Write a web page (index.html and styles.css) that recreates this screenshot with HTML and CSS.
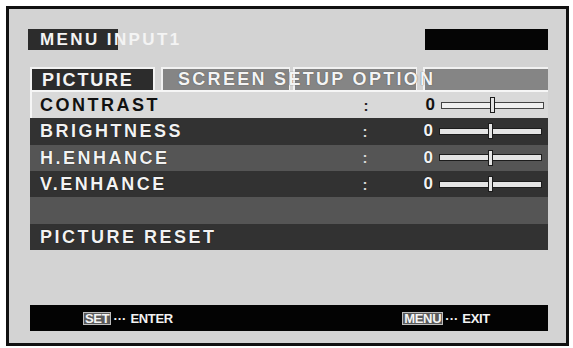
FILE: index.html
```html
<!DOCTYPE html>
<html>
<head>
<meta charset="utf-8">
<link rel="stylesheet" href="styles.css">
</head>
<body>
<div class="screen">
  <div class="header">
    <div class="menu-box">MENU INPUT1</div>
    <div class="black-box"></div>
  </div>
  <div class="tabs">
    <div class="tab-active">PICTURE</div>
    <div class="tab tab-a"><span class="tab-text">SCREEN SETUP OPTION</span></div>
    <div class="tab tab-b"></div>
    <div class="tab tab-c"></div>
  </div>
  <div class="rows">
    <div class="row row-sel">
      <span class="label">CONTRAST</span>
      <span class="colon">:</span>
      <span class="value">0</span>
      <span class="slider"><span class="track"></span><span class="knob"></span></span>
    </div>
    <div class="row row-dark">
      <span class="label">BRIGHTNESS</span>
      <span class="colon">:</span>
      <span class="value">0</span>
      <span class="slider"><span class="track"></span><span class="knob"></span></span>
    </div>
    <div class="row row-mid">
      <span class="label">H.ENHANCE</span>
      <span class="colon">:</span>
      <span class="value">0</span>
      <span class="slider"><span class="track"></span><span class="knob"></span></span>
    </div>
    <div class="row row-dark">
      <span class="label">V.ENHANCE</span>
      <span class="colon">:</span>
      <span class="value">0</span>
      <span class="slider"><span class="track"></span><span class="knob"></span></span>
    </div>
    <div class="row row-mid"></div>
    <div class="row row-dark">
      <span class="label">PICTURE RESET</span>
    </div>
  </div>
  <div class="footer">
    <div class="hint"><span class="key">SET</span><span class="dots">···</span><span class="hint-text">ENTER</span></div>
    <div class="hint"><span class="key">MENU</span><span class="dots">···</span><span class="hint-text">EXIT</span></div>
  </div>
</div>
</body>
</html>
```
FILE: styles.css
```css
html, body {
  margin: 0;
  padding: 0;
  background: #ffffff;
}

body {
  font-family: "Liberation Sans", Arial, sans-serif;
}

.screen {
  margin: 6px 0 0 6px;
  width: 563px;
  height: 340px;
  box-sizing: border-box;
  border: 3px solid #111111;
  background: #d3d3d3;
  padding: 20px 18px 12px 21px;
  display: flex;
  flex-direction: column;
}

.header {
  display: flex;
  justify-content: space-between;
  height: 21px;
}

.menu-box {
  width: 90px;
  margin-left: -2px;
  height: 21px;
  box-sizing: border-box;
  padding-left: 12px;
  background: #2c2c2c;
  color: #f4f4f4;
  font-weight: bold;
  font-size: 17px;
  line-height: 22px;
  letter-spacing: 2.4px;
  white-space: nowrap;
  overflow: visible;
}

.black-box {
  width: 123px;
  height: 21px;
  background: #050505;
}

.tabs {
  display: flex;
  margin-top: 17px;
  height: 23px;
}

.tab-active {
  width: 125px;
  box-sizing: border-box;
  border: 2px solid #f2f2f2;
  border-bottom: none;
  background: #2c2c2c;
  color: #f4f4f4;
  font-weight: bold;
  font-size: 18px;
  line-height: 22px;
  letter-spacing: 1.8px;
  padding-left: 10px;
  white-space: nowrap;
}

.tab {
  box-sizing: border-box;
  background: #858585;
  border-top: 2px solid #f2f2f2;
  border-left: 2px solid #f2f2f2;
  border-right: 1px solid #f2f2f2;
  color: #f4f4f4;
  font-weight: bold;
  font-size: 18px;
  line-height: 21px;
  letter-spacing: 2.3px;
  white-space: nowrap;
}

.tab-a {
  width: 129px;
  margin-left: 6px;
  padding-left: 15px;
  overflow: visible;
  position: relative;
  z-index: 1;
}

.tab-text {
  text-shadow: 0 0 1px #333;
}

.tab-b {
  width: 124px;
  margin-left: 3px;
}

.tab-c {
  width: 125px;
  margin-left: 6px;
  border-right: none;
}

.rows {
  display: flex;
  flex-direction: column;
}

.row {
  height: 26.33px;
  box-sizing: border-box;
  display: grid;
  grid-template-columns: 320px 30px 54px 109px;
  align-items: center;
}

.row-sel {
  background: #d9d9d9;
  border-top: 2px solid #f6f6f6;
  border-left: 2px solid #f6f6f6;
  height: 28.33px;
  color: #111111;
}

.row-dark {
  background: #323232;
  color: #f2f2f2;
}

.row-mid {
  background: #555555;
  color: #f2f2f2;
}

.label {
  padding-left: 10px;
  font-weight: bold;
  font-size: 18px;
  letter-spacing: 2.5px;
  white-space: nowrap;
  line-height: 20px;
}

.row-sel .label {
  padding-left: 8px;
}

.row-dark .label,
.row-mid .label,
.row-dark .value,
.row-mid .value {
  text-shadow: 0 0 1px #000;
}

.colon {
  text-align: center;
  font-weight: bold;
  font-size: 15px;
  color: #d8d8d8;
}

.row-sel .colon {
  color: #222222;
}

.value {
  text-align: right;
  font-weight: bold;
  font-size: 17px;
  padding-right: 1px;
}

.row-sel .colon { margin-left: -2px; }

.slider {
  position: relative;
  margin-left: 5px;
  width: 103px;
  height: 16px;
  display: flex;
  align-items: center;
}

.track {
  width: 103px;
  height: 7px;
  box-sizing: border-box;
  border: 1px solid #1c1c1c;
  background: #e4e4e4;
}

.row-sel .track {
  background: #f0f0f0;
  border-color: #444;
}

.knob {
  position: absolute;
  left: 49px;
  top: 0;
  width: 5px;
  height: 16px;
  box-sizing: border-box;
  border: 1px solid #1c1c1c;
  background: #e4e4e4;
}

.footer {
  margin-top: auto;
  height: 26px;
  background: #030303;
  display: flex;
  justify-content: space-between;
  align-items: center;
  padding: 0 58px 0 53px;
  color: #f2f2f2;
  font-weight: bold;
  font-size: 13px;
}

.hint {
  display: flex;
  align-items: center;
  white-space: nowrap;
}

.key {
  box-sizing: border-box;
  height: 13px;
  line-height: 11px;
  padding: 0 1px;
  border: 1px solid #bdbdbd;
  background: #5a5a5a;
  color: #f4f4f4;
  letter-spacing: -0.3px;
}

.dots {
  margin: 0 4px 0 2px;
  letter-spacing: 0px;
}

.hint-text {
  letter-spacing: -0.3px;
}
```
